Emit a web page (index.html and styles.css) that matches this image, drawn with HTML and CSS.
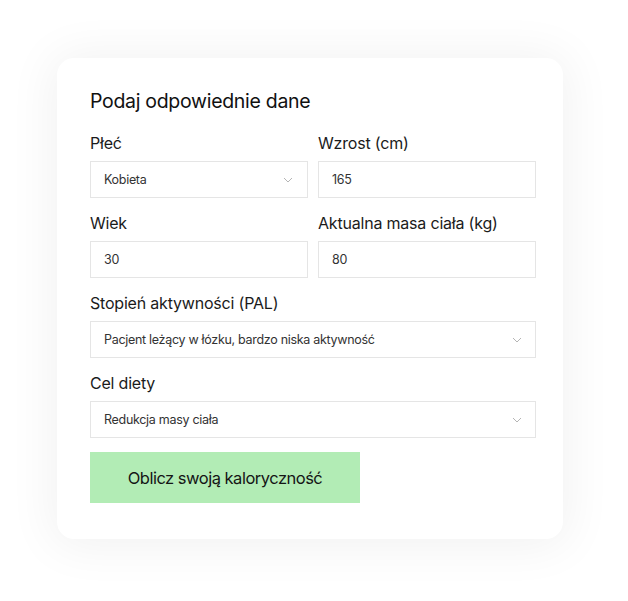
FILE: index.html
```html
<!DOCTYPE html>
<html lang="pl">
<head>
<meta charset="utf-8">
<title>Kalkulator</title>
<link rel="stylesheet" href="styles.css">
</head>
<body>
<div class="page">
  <div class="card">
    <h2 class="title">Podaj odpowiednie dane</h2>
    <div class="grid">
      <div class="field">
        <div class="label">Płeć</div>
        <div class="box"><span>Kobieta</span><svg class="chev" width="10" height="6" viewBox="0 0 10 6"><path d="M1 1l4 4 4-4" fill="none" stroke="#b5b5b5" stroke-width="1"/></svg></div>
      </div>
      <div class="field">
        <div class="label">Wzrost (cm)</div>
        <div class="box"><span>165</span></div>
      </div>
      <div class="field">
        <div class="label">Wiek</div>
        <div class="box"><span>30</span></div>
      </div>
      <div class="field">
        <div class="label">Aktualna masa ciała (kg)</div>
        <div class="box"><span>80</span></div>
      </div>
      <div class="field wide">
        <div class="label">Stopień aktywności (PAL)</div>
        <div class="box"><span>Pacjent leżący w łózku, bardzo niska aktywność</span><svg class="chev" width="10" height="6" viewBox="0 0 10 6"><path d="M1 1l4 4 4-4" fill="none" stroke="#b5b5b5" stroke-width="1"/></svg></div>
      </div>
      <div class="field wide">
        <div class="label">Cel diety</div>
        <div class="box"><span>Redukcja masy ciała</span><svg class="chev" width="10" height="6" viewBox="0 0 10 6"><path d="M1 1l4 4 4-4" fill="none" stroke="#b5b5b5" stroke-width="1"/></svg></div>
      </div>
    </div>
    <button class="btn">Oblicz swoją kaloryczność</button>
  </div>
</div>
</body>
</html>
```
FILE: styles.css
```css
* { box-sizing: border-box; }
html, body { margin: 0; padding: 0; background: #ffffff; }
body { font-family: Inter, "Noto Sans", sans-serif; color: #1b1b1b; }
.page { padding: 58px 65px 62px 57px; }
.card {
  width: 506px;
  height: 481px;
  background: #ffffff;
  border-radius: 17px;
  box-shadow: 0 2px 48px 6px rgba(0, 0, 0, 0.055);
  padding: 31px 27px 36px 33px;
}
.title {
  margin: 0;
  font-size: 19.5px;
  line-height: 24px;
  font-weight: 400;
  letter-spacing: -0.3px;
  color: #111111;
}
.grid {
  margin-top: 20px;
  display: grid;
  grid-template-columns: 218px 218px;
  column-gap: 10px;
  row-gap: 15px;
}
.field.wide { grid-column: 1 / span 2; }
.label {
  font-size: 16px;
  line-height: 20px;
  letter-spacing: -0.2px;
  margin-bottom: 8px;
  color: #1b1b1b;
}
.box {
  height: 37px;
  border: 1px solid #e5e5e5;
  display: flex;
  align-items: center;
  justify-content: space-between;
  padding: 0 14px 0 13px;
  font-size: 12.5px;
  letter-spacing: -0.3px;
  color: #333333;
}
.field.wide .box { padding-right: 13px; }
.chev { flex: none; }
.btn {
  margin-top: 14px;
  width: 270px;
  height: 51px;
  border: none;
  background: #b2ecb5;
  font-family: inherit;
  font-size: 16.5px;
  letter-spacing: -0.5px;
  color: #151515;
  padding: 0;
  display: block;
}
```
